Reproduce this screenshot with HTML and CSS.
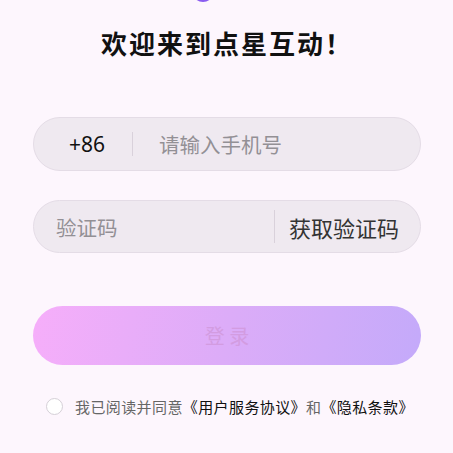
FILE: index.html
```html
<!DOCTYPE html>
<html lang="zh-CN">
<head>
	<meta charset="UTF-8">
	<title>点星互动 - 登录</title>

	<link rel="stylesheet" href="styles.css">
</head>
<body>
<div class="page">
	<div class="logo"></div>
	<h1 class="title">欢迎来到点星互动！</h1>
	<form class="login" action="#" method="get">
		<div class="field">
			<span class="area">+86</span>
			<span class="divider"></span>
			<input class="phone" type="tel" placeholder="请输入手机号">
		</div>
		<div class="field field-code">
			<input class="code" type="text" placeholder="验证码">
			<span class="divider"></span>
			<span class="get-code">获取验证码</span>
		</div>
		<button class="submit" type="submit">登 录</button>
		<label class="agree">
			<span class="radio"></span>
			<span class="agree-text">我已阅读并同意<b>《用户服务协议》</b>和<b>《隐私条款》</b></span>
		</label>
	</form>
</div>
</body>
</html>
```

FILE: styles.css
```css
*{
    margin: 0;
    padding: 0;
    box-sizing: border-box;
}

body{
    width: 100%;
    height: 100vh;
    background: #fdf6fd;
    font-family: "Noto Sans", "Noto Sans CJK SC", sans-serif;
    overflow: hidden;
}

.page{
    padding: 0 32px 0 33px;
}

.logo{
    width: 22px;
    height: 22px;
    margin: -20px auto 0;
    position: relative;
    left: -24px;
    border-radius: 50%;
    background: #8a5cf0;
}

.title{
    margin-top: 24px;
    text-align: center;
    font-size: 26px;
    line-height: 36px;
    letter-spacing: 2px;
    font-weight: 700;
    color: #111;
}

.field{
    display: flex;
    align-items: center;
    height: 54px;
    margin-top: 55px;
    border: 1px solid #e4dce6;
    border-radius: 27px;
    background: #efe9f0;
}

.field-code{
    height: 53px;
    margin-top: 29px;
}

.divider{
    width: 1px;
    height: 24px;
    background: #d9d1db;
}

.field-code .divider{
    height: 33px;
}

.area{
    padding: 0 27px 0 35px;
    font-size: 21px;
    color: #111;
}

input{
    flex: 1;
    min-width: 0;
    height: 100%;
    border: none;
    outline: none;
    background: transparent;
    font-family: "Noto Sans CJK SC", sans-serif;
    font-size: 20.5px;
    color: #222;
}

input::placeholder{
    color: #939095;
}

.phone{
    padding-left: 26px;
}

.code{
    padding-left: 22px;
}

.get-code{
    padding: 0 21px 0 14px;
    font-family: "Noto Sans CJK SC", sans-serif;
    font-size: 22px;
    color: #333;
}

.submit{
    display: block;
    width: 100%;
    height: 59px;
    margin-top: 53px;
    border: none;
    border-radius: 30px;
    background: linear-gradient(100deg, #f6aefa 0%, #dcacf8 50%, #c4aafa 100%);
    font-family: "Noto Sans CJK SC", sans-serif;
    font-size: 20px;
    color: #d39ce1;
}

.agree{
    display: flex;
    align-items: center;
    margin-top: 31px;
    padding-left: 13px;
}

.radio{
    width: 17px;
    height: 17px;
    border: 1px solid #d5d0d7;
    border-radius: 50%;
    background: #fff;
}

.agree-text{
    margin-left: 12px;
    font-family: "Noto Sans CJK SC", sans-serif;
    font-size: 15px;
    letter-spacing: 0.4px;
    color: #666;
}

.agree-text b{
    font-weight: 400;
    color: #111;
}
```
